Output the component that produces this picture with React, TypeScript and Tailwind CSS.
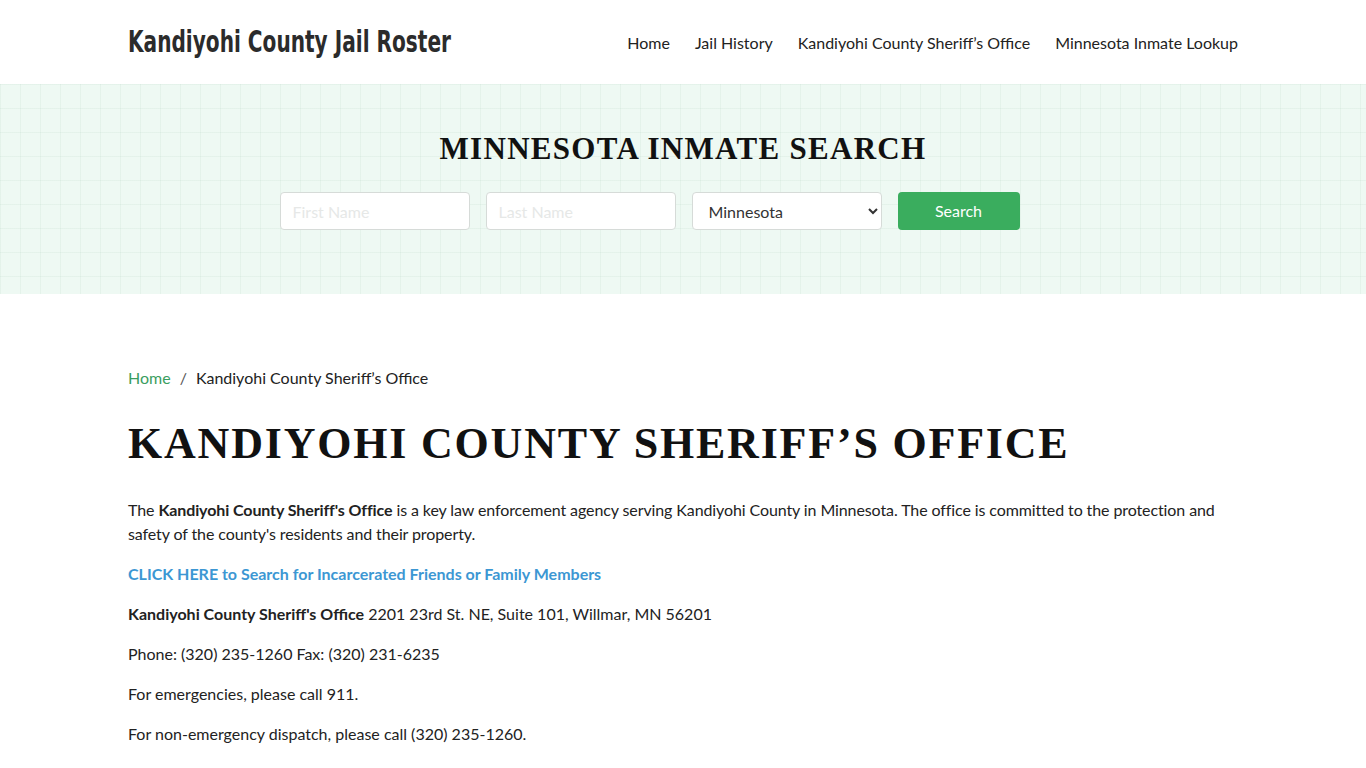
import React from "react";

const lato = { fontFamily: "Lato, 'Open Sans', sans-serif" };
const serif = { fontFamily: "'Liberation Serif', 'Times New Roman', serif" };

function Header() {
  const links = ["Home", "Jail History", "Kandiyohi County Sheriff’s Office", "Minnesota Inmate Lookup"];
  return (
    <header className="h-[84px] bg-white">
      <div className="mx-auto flex h-full max-w-[1140px] items-center justify-between px-[15px]">
        <a href="#" className="block w-[324px] overflow-visible whitespace-nowrap">
          <span
            className="inline-block origin-left scale-x-[0.67] text-[30px] font-bold leading-none text-[#2b2b2b]"
            style={{ fontFamily: "'DejaVu Sans', sans-serif" }}
          >
            Kandiyohi County Jail Roster
          </span>
        </a>
        <nav className="flex items-center gap-[25px] pt-[2px] text-[16px] text-[#222]" style={lato}>
          {links.map((l) => (
            <a key={l} href="#" className="leading-6">
              {l}
            </a>
          ))}
        </nav>
      </div>
    </header>
  );
}

function Hero() {
  return (
    <section className="h-[210px] bg-[#eef9f3] bg-[linear-gradient(to_right,rgba(160,195,175,0.12)_1px,transparent_1px),linear-gradient(to_bottom,rgba(160,195,175,0.12)_1px,transparent_1px)] bg-[size:20px_24px]">
      <div className="flex flex-col items-center pt-[46px]">
        <h2 className="text-[31px] font-bold uppercase leading-[38px] tracking-[1.3px] text-[#111]" style={serif}>
          Minnesota Inmate Search
        </h2>
        <form className="mt-[24px] flex gap-[16px] pr-[67px]" style={lato} onSubmit={(e) => e.preventDefault()}>
          <input
            placeholder="First Name"
            className="h-[38px] w-[190px] rounded-[4px] border border-[#d6dbd8] bg-white px-3 text-[16px] outline-none placeholder:text-[#e6e8e7]"
          />
          <input
            placeholder="Last Name"
            className="h-[38px] w-[190px] rounded-[4px] border border-[#d6dbd8] bg-white px-3 text-[16px] outline-none placeholder:text-[#e6e8e7]"
          />
          <select
            defaultValue="Minnesota"
            className="h-[38px] w-[190px] rounded-[4px] border border-[#d6dbd8] bg-white pl-[12px] pr-1 text-[16px] text-[#333] outline-none"
          >
            <option>Minnesota</option>
          </select>
          <button className="h-[38px] w-[122px] rounded-[4px] bg-[#3aad5e] text-[16px] text-white">Search</button>
        </form>
      </div>
    </section>
  );
}

function Content() {
  return (
    <main className="mx-auto max-w-[1140px] px-[15px] pt-[72px] text-[16px] leading-6 text-[#222]" style={lato}>
      <nav className="flex items-center text-[16px] leading-6">
        <a href="#" className="text-[#3a9e5f]">
          Home
        </a>
        <span className="px-[9px] text-[#555]">/</span>
        <span className="text-[#222]">Kandiyohi County Sheriff’s Office</span>
      </nav>
      <h1 className="mt-[26px] text-[44px] font-bold uppercase leading-[56px] tracking-[1.8px] text-[#111]" style={serif}>
        Kandiyohi County Sheriff’s Office
      </h1>
      <p className="mt-[26px] tracking-[-0.1px]">
        The <strong className="font-bold">Kandiyohi County Sheriff's Office</strong> is a key law enforcement agency serving Kandiyohi County in
        Minnesota. The office is committed to the protection and safety of the county's residents and their property.
      </p>
      <p className="mt-4">
        <a href="#" className="font-bold text-[#3c97d3]">
          CLICK HERE to Search for Incarcerated Friends or Family Members
        </a>
      </p>
      <p className="mt-4">
        <strong className="font-bold">Kandiyohi County Sheriff's Office</strong> 2201 23rd St. NE, Suite 101, Willmar, MN 56201
      </p>
      <p className="mt-4">Phone: (320) 235-1260 Fax: (320) 231-6235</p>
      <p className="mt-4">For emergencies, please call 911.</p>
      <p className="mt-4">For non-emergency dispatch, please call (320) 235-1260.</p>
    </main>
  );
}

export default function App() {
  return (
    <div className="min-h-screen bg-white">
      <Header />
      <Hero />
      <Content />
    </div>
  );
}
